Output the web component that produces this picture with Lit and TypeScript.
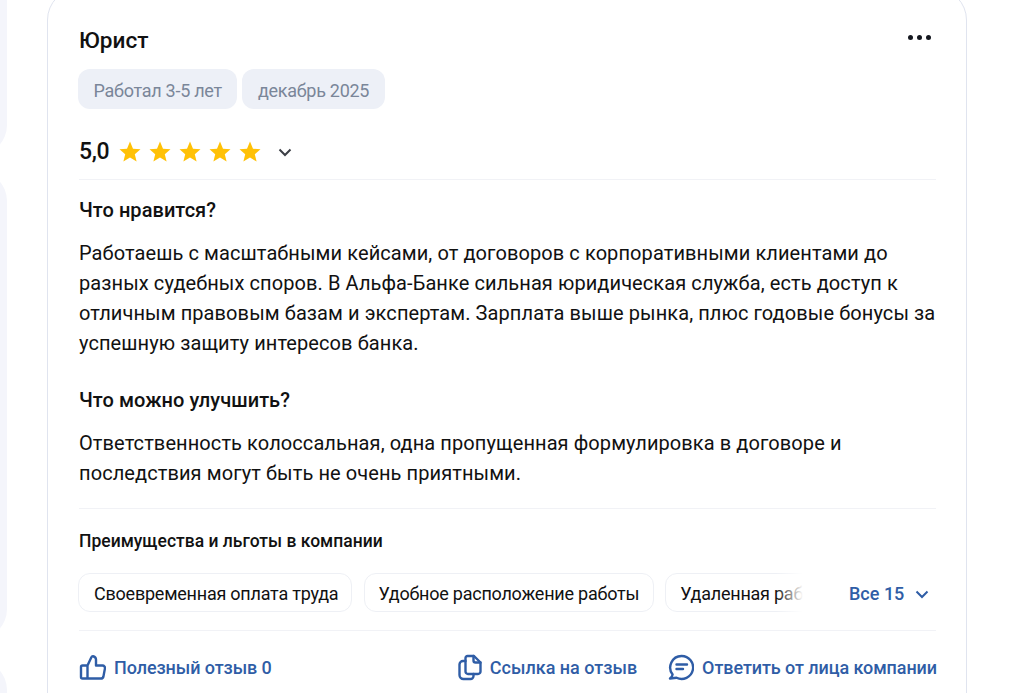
import { LitElement, html, css, svg } from "lit";
import { customElement } from "lit/decorators.js";

const star = svg`<svg class="star" viewBox="0 0 22 22" width="22" height="22"><path fill="#ffc107" d="M11 .5l3 7.200 7.500.6-5.700 4.900 1.800 7.300L11 16.600l-6.600 3.900 1.800-7.300L.5 8.300l7.500-.6z"/></svg>`;

@customElement("app-root")
export class AppRoot extends LitElement {
  static styles = css`
    :host { display: block; height: 693px; overflow: hidden; background: #fff; font-family: Roboto, "Noto Sans", sans-serif; color: #111; }
    .page { display: flex; height: 693px; }
    .side { width: 7px; flex: none; margin-right: 40px; display: flex; flex-direction: column; gap: 16px; margin-top: -200px; overflow: hidden; }
    .side div { background: #f4f5fb; border-radius: 32px; flex: none; width: 60px; margin-left: -53px; }
    .s1 { height: 355px; }
    .s2 { height: 468px; }
    .s3 { height: 200px; margin-top: 5px; }
    .card { width: 920px; box-sizing: border-box; height: 760px; margin-top: -12px; flex: none; border: 1px solid #e0e4ef; border-radius: 32px; padding: 32px 30px 0 31px; }
    .top { display: flex; justify-content: space-between; height: 38px; align-items: center; }
    h2 { margin: 2px 0 0; font-size: 22.600px; font-weight: 500; line-height: 40px; }
    .dots { display: flex; gap: 4px; margin: -6px 5px 0 0; }
    .dots i { width: 5px; height: 5px; border-radius: 50%; background: #14171f; }
    .tags { display: flex; gap: 5px; margin: 10px 0 0 -1px; }
    .tag { height: 40px; line-height: 43px; padding: 0 15.500px; background: #edf0f7; border-radius: 12px; color: #7a8699; font-size: 18px; letter-spacing: -0.27px; }
    .rating { display: flex; align-items: center; height: 40px; margin-top: 23px; }
    .score { font-size: 23px; font-weight: 500; width: 40px; letter-spacing: -0.4px; padding-bottom: 2px; }
    .stars { display: flex; gap: 8px; margin-right: 16px; }
    .star { display: block; }
    .chev { display: block; }
    hr { border: 0; border-top: 1px solid #f1f2f6; margin: 0; }
    .d1 { margin-top: 7px; }
    h3 { margin: 0; font-size: 20px; font-weight: 500; line-height: 30px; letter-spacing: 0.05px; }
    p { margin: 0; font-size: 20px; line-height: 30px; color: #111; letter-spacing: 0.09px; }
    .h1 { margin-top: 15px; }
    .p1 { margin-top: 13px; }
    .h2 { margin-top: 27px; }
    .p2 { margin-top: 13px; }
    .d2 { margin-top: 20px; }
    .adv { font-size: 17.500px; font-weight: 500; line-height: 24px; margin-top: 20px; }
    .chips { display: flex; align-items: center; margin-top: 20px; height: 39px; }
    .viewport { width: 728px; flex: none; overflow: hidden; position: relative; display: flex; gap: 12px; margin-left: -1px; }
    .viewport::after { content: ""; position: absolute; right: 0; top: 0; bottom: 0; width: 30px; background: linear-gradient(90deg, rgba(255,255,255,0), #fff 90%); }
    .chip { flex: none; height: 39px; box-sizing: border-box; line-height: 40px; padding: 0 14px; border: 1px solid #eef0f5; border-radius: 12px; font-size: 18px; letter-spacing: -0.23px; white-space: nowrap; }
    .c1 { padding: 0 13px 0 15px; }
    .c2 { padding: 0 14px 0 13px; }
    .c3 { margin-left: -1px; }
    .all { display: flex; align-items: center; color: #2f5da6; font-size: 18px; font-weight: 500; margin-left: 43px; gap: 10px; line-height: 36px; padding-top: 2px; }
    .d3 { margin-top: 18px; }
    .actions { display: flex; align-items: center; justify-content: space-between; margin-top: 22px; height: 28px; width: 858px; }
    .act { display: flex; align-items: center; gap: 8px; color: #2f5da6; font-size: 18px; font-weight: 500; white-space: nowrap; }
    .tight { letter-spacing: -0.08px; }
    .act svg { display: block; flex: none; }
    .right { display: flex; gap: 31px; }
  `;

  render() {
    return html`<div class="page">
      <div class="side"><div class="s1"></div><div class="s2"></div><div class="s3"></div></div>
      <div class="card">
        <div class="top"><h2>Юрист</h2><div class="dots"><i></i><i></i><i></i></div></div>
        <div class="tags"><span class="tag">Работал 3-5 лет</span><span class="tag">декабрь 2025</span></div>
        <div class="rating">
          <span class="score">5,0</span>
          <div class="stars">${star}${star}${star}${star}${star}</div>
          <svg class="chev" width="16" height="16" viewBox="0 0 16 16"><path d="M2.500 5.500 8 11l5.500-5.500" fill="none" stroke="#3c3f46" stroke-width="2"/></svg>
        </div>
        <hr class="d1" />
        <h3 class="h1">Что нравится?</h3>
        <p class="p1">Работаешь с масштабными кейсами, от договоров с корпоративными клиентами до разных судебных споров. В Альфа-Банке сильная юридическая служба, есть доступ к отличным правовым базам и экспертам. Зарплата выше рынка, плюс годовые бонусы за успешную защиту интересов банка.</p>
        <h3 class="h2">Что можно улучшить?</h3>
        <p class="p2">Ответственность колоссальная, одна пропущенная формулировка в договоре и<br />последствия могут быть не очень приятными.</p>
        <hr class="d2" />
        <div class="adv">Преимущества и льготы в компании</div>
        <div class="chips">
          <div class="viewport">
            <span class="chip c1">Своевременная оплата труда</span>
            <span class="chip c2">Удобное расположение работы</span>
            <span class="chip c3">Удаленная работа</span>
          </div>
          <span class="all">Все 15
            <svg width="16" height="16" viewBox="0 0 16 16"><path d="M2.500 5.500 8 11l5.500-5.500" fill="none" stroke="#2f5da6" stroke-width="2"/></svg>
          </span>
        </div>
        <hr class="d3" />
        <div class="actions">
          <span class="act tight">
            <svg width="27" height="28" viewBox="0 0 27 28" fill="none" stroke="#2f5da6" stroke-width="2.400" stroke-linejoin="round"><path d="M8.500 12.500H3.500A1.500 1.500 0 0 0 2 14v10a1.500 1.500 0 0 0 1.500 1.500H22a2.500 2.500 0 0 0 2.400-1.900l1.500-8a2.500 2.500 0 0 0-2.400-3.100H17V6.500a3.500 3.500 0 0 0-3-3.300 1.500 1.500 0 0 0-1.500.9L8.500 12.500v13"/></svg>
            Полезный отзыв 0
          </span>
          <div class="right">
            <span class="act">
              <svg width="24" height="28" viewBox="0 0 24 28" fill="none" stroke="#2f5da6" stroke-width="2.400" stroke-linejoin="round" stroke-linecap="round"><path d="M9.500 3H16l6.500 6.500v9a2.500 2.500 0 0 1-2.500 2.500H10a2.500 2.500 0 0 1-2.500-2.500V5a2 2 0 0 1 2-2z"/><path d="M15.500 3v4.500a2 2 0 0 0 2 2h5"/><path d="M7.500 8H5a3.500 3.500 0 0 0-3.500 3.500V22a4 4 0 0 0 4 4h7a3 3 0 0 0 3-3v-2"/></svg>
              Ссылка на отзыв
            </span>
            <span class="act tight">
              <svg width="26" height="28" viewBox="0 0 26 28" fill="none" stroke="#2f5da6" stroke-width="2.400" stroke-linecap="round" stroke-linejoin="round"><path d="M13.500 3a11.500 11.500 0 1 1-5 21.800L2 25.500c1.700-1.300 2.500-2.600 2.600-4A11.500 11.500 0 0 1 13.500 3z"/><path d="M8.500 11.500h10.500M8.500 16h6.500"/></svg>
              Ответить от лица компании
            </span>
          </div>
        </div>
      </div>
    </div>`;
  }
}
